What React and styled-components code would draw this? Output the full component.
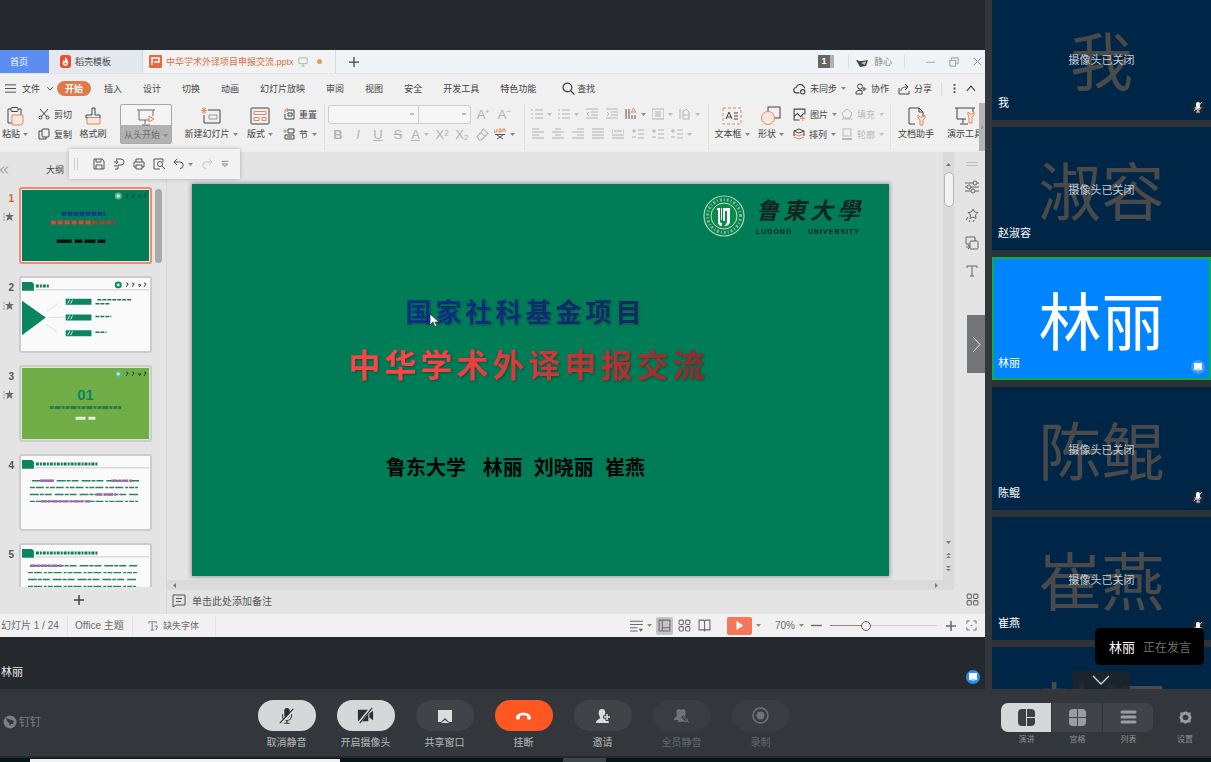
import { useState } from "react";
import styled, { createGlobalStyle, css } from "styled-components";

const GlobalStyle = createGlobalStyle`
  *, *::before, *::after {
    box-sizing: border-box;
  }
  body {
    margin: 0;
    background: #33363b;
    font-family: "Liberation Sans", "Noto Sans CJK SC", sans-serif;
    font-size: 9px;
    color: #444;
  }
  button {
    margin: 0;
    padding: 0;
    border: none;
    background: none;
    color: inherit;
    font: inherit;
    cursor: pointer;
  }
  svg {
    display: block;
    flex: none;
  }
`;

/* ---------- page ---------- */

const Page = styled.div`
  display: flex;
  flex-direction: column;
  min-height: 100vh;
`;
const Meeting = styled.div`
  display: flex;
  gap: 7px;
  background: #33363b;
`;
const Stage = styled.main`
  flex: 1;
  min-width: 0;
  display: flex;
  flex-direction: column;
  padding-top: 50px;
  background: #25282d;
`;
const StageFooter = styled.div`
  display: flex;
  flex: 1;
  justify-content: space-between;
  align-items: flex-end;
  padding: 0 5px 5px 1px;
  min-height: 48px;
`;
const Speaker = styled.span`
  padding-bottom: 4px;
  font-size: 11px;
  line-height: 16px;
  color: #e8e8e8;
`;

/* ---------- presentation window ---------- */

const Office = styled.section`
  position: relative;
  overflow: hidden;
  background: #f0f0f0;
`;
const TitleBar = styled.div`
  display: flex;
  align-items: center;
  height: 24px;
  background: #eff3f5;
  border-bottom: 1px solid #dfe5e8;
`;
const DocTab = styled.button`
  display: flex;
  align-items: center;
  gap: 4px;
  align-self: stretch;
  width: ${(props) => props.$w}px;
  padding-left: ${(props) => props.$pad}px;
  white-space: nowrap;
  ${(props) =>
    props.$kind === "home" &&
    css`
      background: #5c8df0;
      color: #fff;
    `}
  ${(props) =>
    props.$kind === "plain" &&
    css`
      background: #e4e9f0;
    `}
  ${(props) =>
    props.$kind === "open" &&
    css`
      background: #f1f2f2;
      border-left: 1px solid #d0dbe0;
      border-right: 1px solid #d0dbe0;
      color: #d9703f;
    `}
`;
const Dot = styled.i`
  width: 5px;
  height: 5px;
  margin-left: 5px;
  border-radius: 50%;
  background: #e0a04c;
`;
const WindowTools = styled.div`
  display: flex;
  align-items: center;
  gap: 14px;
  margin-left: auto;
  padding-right: 3px;
  color: #8a8a8a;
`;
const CountBadge = styled.span`
  width: 16px;
  height: 13px;
  border-right: 4px solid #b0b0b0;
  background: #666;
  color: #fff;
  font-weight: bold;
  line-height: 13px;
  text-align: center;
`;
const Account = styled.span`
  display: flex;
  align-items: center;
  gap: 5px;
  margin-right: 7px;
  padding: 0 12px 0 7px;
  border-left: 1px solid #dcdfe0;
  border-right: 1px solid #dcdfe0;
`;

const MenuBar = styled.nav`
  display: flex;
  align-items: center;
  height: 29px;
  padding: 0 8px 0 5px;
  white-space: nowrap;
`;
const MenuList = styled.div`
  display: flex;
  align-items: center;
  gap: 21px;
  padding-left: 13px;
`;
const FileMenu = styled.button`
  display: flex;
  align-items: center;
  gap: 6px;
`;
const StartPill = styled.button`
  width: 34px;
  height: 15px;
  margin-left: 3px;
  border-radius: 8px;
  background: #e07a4b;
  color: #fff;
  font-weight: bold;
`;
const Search = styled.button`
  display: flex;
  align-items: center;
  gap: 2px;
  margin-left: 5px;
`;
const MenuRight = styled.div`
  display: flex;
  align-items: center;
  gap: 9px;
  margin-left: auto;
`;
const MenuDivider = styled.i`
  width: 1px;
  height: 14px;
  margin-right: 2px;
  background: #dedede;
`;
const IconText = styled.button`
  display: flex;
  align-items: center;
  gap: 4px;
  white-space: nowrap;
  color: ${(props) => (props.$dim ? "#b8b8b8" : "inherit")};
`;

const Ribbon = styled.div`
  display: flex;
  height: 49px;
  padding-top: 1px;
  border-bottom: 1px solid #ebebeb;
  > * {
    flex: none;
  }
`;
const BigButton = styled.button`
  display: flex;
  flex-direction: column;
  align-items: center;
  width: ${(props) => props.$w}px;
  height: 40px;
  margin-left: ${(props) => props.$ml || 0}px;
  line-height: 13px;
  white-space: nowrap;
  ${(props) =>
    props.$active &&
    css`
      border: 1px solid #a8a8a8;
      border-radius: 2px;
      background: linear-gradient(#f4f4f4 20px, #b2b2b2 20px);
      color: #6c6c6c;
    `}
`;
const BigIcon = styled.span`
  display: grid;
  place-items: center;
  height: 24px;
`;
const Label = styled.span`
  display: inline-flex;
  align-items: center;
  gap: 3px;
`;
const Stack = styled.div`
  display: flex;
  flex-direction: column;
  align-items: flex-start;
  width: ${(props) => props.$w}px;
  padding-left: ${(props) => props.$pad || 8}px;
  > button {
    height: 20px;
  }
`;
const Separator = styled.i`
  width: 8px;
  height: 46px;
  background: linear-gradient(#e2e2e2, #e2e2e2) center / 1px 100% no-repeat;
`;
const ToolGroup = styled.div`
  width: ${(props) => props.$w}px;
`;
const ToolRow = styled.div`
  display: flex;
  align-items: center;
  height: 20px;
`;
const Tool = styled.button`
  display: flex;
  align-items: center;
  justify-content: center;
  gap: 4px;
  width: ${(props) => props.$w || 20}px;
  height: 18px;
  font-size: 13px;
  font-weight: ${(props) => (props.$bold ? "bold" : "normal")};
  font-style: ${(props) => (props.$italic ? "italic" : "normal")};
  text-decoration: ${(props) => props.$line || "none"};
  color: #b2b2b2;
`;
const FontSelect = styled.select`
  appearance: none;
  width: ${(props) => props.$w}px;
  height: 19px;
  padding: 0 4px;
  border: 1px solid #cdcdcd;
  border-radius: ${(props) => (props.$end ? "0 3px 3px 0" : "3px 0 0 3px")};
  border-left-width: ${(props) => (props.$end ? 0 : 1)}px;
  background: linear-gradient(#bbb, #bbb) right 4px center / 4px 2px no-repeat
    #f6f6f6;
`;
const RibbonMore = styled.button`
  position: absolute;
  top: 53px;
  right: 0;
  width: 6px;
  height: 48px;
  background: #b5b5b8;
  color: #777;
`;

const Workspace = styled.div`
  position: relative;
  display: flex;
  background: #e4e4e4;
`;
const QuickBar = styled.div`
  position: absolute;
  z-index: 2;
  top: -3px;
  left: 69px;
  display: flex;
  align-items: center;
  gap: 8px;
  height: 30px;
  padding: 0 11px 0 5px;
  background: #f2f2f2;
  box-shadow: 0 0 4px #aaa;
  color: #555;
`;
const Grip = styled.i`
  width: 4px;
  height: 12px;
  margin-right: 7px;
  border: solid #ccc;
  border-width: 0 1px;
`;
const Outline = styled.aside`
  display: flex;
  flex-direction: column;
  width: 167px;
  border-right: 1px solid #d8d8d8;
`;
const OutlineHead = styled.div`
  display: flex;
  align-items: center;
  gap: 37px;
  height: 35px;
`;
const ThumbArea = styled.div`
  display: flex;
  height: 400px;
  overflow: hidden;
`;
const ThumbList = styled.ol`
  display: flex;
  flex-direction: column;
  gap: 12px;
  width: 152px;
  margin: 0;
  padding: 0;
  list-style: none;
`;
const ThumbItem = styled.li`
  display: flex;
`;
const ThumbMeta = styled.div`
  display: flex;
  flex-direction: column;
  align-items: flex-end;
  gap: 7px;
  width: 19px;
  padding: 5px 5px 0 0;
  font-size: 10px;
  line-height: 13px;
  font-weight: bold;
  color: ${(props) => (props.$current ? "#c9642f" : "#555")};
`;
const ThumbFrame = styled.button`
  flex: 1;
  height: 77px;
  padding: 1px;
  border: 2px solid ${(props) => (props.$current ? "#f08a70" : "#cccccc")};
  border-radius: 3px;
  background: ${(props) => props.$edge};
`;
const Thumb = styled.div`
  width: 7px;
  height: ${(props) => props.$h}px;
  margin: 2px 0 0 3px;
  border-radius: 4px;
  background: #a9a9a9;
`;
const AddSlide = styled.button`
  display: grid;
  place-items: center;
  height: 26px;
  padding-right: 8px;
`;

const Editor = styled.div`
  flex: 1;
  min-width: 0;
`;
const CanvasRow = styled.div`
  display: flex;
`;
const Canvas = styled.div`
  flex: 1;
  min-width: 0;
  padding: 32px 54px 4px 25px;
`;
const Slide = styled.article`
  position: relative;
  display: flex;
  flex-direction: column;
  align-items: center;
  aspect-ratio: 16 / 9;
  padding-top: 11px;
  background: #007c57;
  box-shadow: 0 0 4px 1px #9a9a9a;
  white-space: nowrap;
`;
const Crest = styled.div`
  display: flex;
  align-items: center;
  align-self: flex-end;
  gap: 11px;
  margin-right: 29px;
`;
const School = styled.div`
  width: 104px;
  color: #10271f;
`;
const SchoolName = styled.div`
  display: flex;
  justify-content: space-between;
  font-size: 23px;
  line-height: 32px;
  font-weight: bold;
  font-style: italic;
`;
const SchoolLatin = styled.div`
  display: flex;
  justify-content: space-between;
  font-size: 7px;
  line-height: 10px;
  font-weight: bold;
  letter-spacing: 1px;
`;
const Topic = styled.h2`
  margin: 57px 30px 0 0;
  background: linear-gradient(90deg, #0a2d8c, #14295e);
  background-clip: text;
  color: transparent;
  font-size: 26px;
  line-height: 38px;
  letter-spacing: 4px;
  filter: drop-shadow(1px 1px 1px rgba(0, 30, 40, 0.35));
`;
const Headline = styled.h1`
  margin: 11px 24px 0 0;
  background: linear-gradient(90deg, #ff4444 20%, #8c2a2c);
  background-clip: text;
  color: transparent;
  font-size: 32px;
  line-height: 46px;
  letter-spacing: 4px;
  filter: drop-shadow(1px 1px 1px rgba(0, 30, 20, 0.45));
`;
const Authors = styled.p`
  margin: 65px 50px 0 0;
  font-size: 20px;
  line-height: 28px;
  font-weight: bold;
  color: #050505;
  white-space: pre;
`;
const Pointer = styled.svg`
  position: absolute;
  top: 33%;
  left: 34%;
`;
const VScroll = styled.div`
  display: flex;
  flex-direction: column;
  align-items: center;
  gap: 5px;
  width: 11px;
  padding: 10px 0 9px;
  background: #dadada;
  color: #777;
`;
const VThumb = styled.div`
  width: 10px;
  height: 35px;
  margin-bottom: auto;
  border: 1px solid #b5b5b5;
  border-radius: 5px;
  background: #f3f3f3;
`;
const ScrollMarks = styled.div`
  display: flex;
  flex-direction: column;
  gap: 8px;
`;
const HScroll = styled.div`
  display: flex;
  justify-content: space-between;
  align-items: center;
  height: 10px;
  padding: 0 15px 0 5px;
  background: #dadada;
  color: #777;
`;
const Notes = styled.div`
  display: flex;
  align-items: center;
  gap: 6px;
  height: 24px;
  padding: 0 0 3px 5px;
  font-size: 10px;
  color: #555;
`;
const Rail = styled.div`
  display: flex;
  flex-direction: column;
  align-items: center;
  gap: 14px;
  width: 31px;
  padding: 10px 0 8px 5px;
  color: #666;
`;
const RailFoot = styled.button`
  margin-top: auto;
`;
const Collapse = styled.button`
  position: absolute;
  top: 163px;
  right: 0;
  display: grid;
  place-items: center;
  width: 18px;
  height: 58px;
  background: #737577;
  color: #e6e6e6;
`;

const StatusBar = styled.div`
  display: flex;
  align-items: center;
  height: 23px;
  padding-right: 8px;
  background: #f1f1f1;
  color: #6a6a6a;
  white-space: nowrap;
`;
const StatusCell = styled.span`
  display: flex;
  align-items: center;
  gap: 5px;
  width: ${(props) => props.$w}px;
  padding-left: ${(props) => props.$pad}px;
  border-right: 1px solid #e4e4e4;
  line-height: 20px;
  font-size: ${(props) => props.$size || 9}px;
`;
const ViewTools = styled.div`
  display: flex;
  align-items: center;
  gap: 4px;
  margin-left: auto;
`;
const ViewButton = styled.button`
  display: grid;
  place-items: center;
  width: 17px;
  height: 18px;
  margin-right: -1px;
  border-radius: 2px;
  background: ${(props) => (props.$on ? "#c4c4c4" : "none")};
`;
const PlayButton = styled.button`
  display: grid;
  place-items: center;
  width: 25px;
  height: 18px;
  margin-left: 11px;
  border-radius: 2px;
  background: #f5775a;
  color: #fff;
`;
const Percent = styled.span`
  margin-left: 10px;
  font-size: 10px;
`;
const ZoomControl = styled.div`
  display: flex;
  align-items: center;
  gap: 8px;
  margin: 0 5px 0 3px;
`;
const ZoomRange = styled.input`
  appearance: none;
  width: 107px;
  height: 12px;
  margin: 0;
  background: linear-gradient(90deg, #8a8a8a 32%, #cfcfcf 32%) center / 100% 1px
    no-repeat;
  &::-webkit-slider-thumb {
    appearance: none;
    width: 10px;
    height: 10px;
    border: 1px solid #666;
    border-radius: 50%;
    background: #f1f1f1;
  }
`;

/* ---------- participants ---------- */

const Sidebar = styled.aside`
  position: relative;
  width: 219px;
  height: 689px;
  overflow: hidden;
  background: #2e3136;
`;
const TileList = styled.ul`
  display: flex;
  flex-direction: column;
  gap: 7px;
  margin: -3px 0 0;
  padding: 0;
  list-style: none;
`;
const Tile = styled.li`
  position: relative;
  display: grid;
  place-items: center;
  height: 123px;
  border: 2px solid ${(props) => (props.$active ? "#0bb04c" : "#002647")};
  background: ${(props) => (props.$active ? "#0084ff" : "#002647")};
`;
const Initials = styled.span`
  font-size: 63px;
  line-height: 80px;
  padding-top: 9px;
  color: ${(props) => (props.$active ? "#fff" : "#4a4a4a")};
`;
const CameraOff = styled.span`
  position: absolute;
  inset: 0;
  display: grid;
  place-items: center;
  font-size: 11px;
  color: #c9cdd1;
`;
const TileName = styled.span`
  position: absolute;
  left: 4px;
  bottom: 7px;
  font-size: 11px;
  line-height: 16px;
  color: #fff;
`;
const TileBadge = styled.span`
  position: absolute;
  right: 4px;
  bottom: 4px;
`;
const Speaking = styled.div`
  position: absolute;
  right: 7px;
  bottom: 24px;
  display: flex;
  align-items: center;
  gap: 8px;
  height: 37px;
  padding: 0 13px 0 14px;
  border-radius: 5px;
  background: #000;
  font-size: 12px;
  color: #6e6e6e;
  b {
    font-size: 13px;
    font-weight: normal;
    color: #fff;
  }
`;
const ScrollDown = styled.button`
  position: absolute;
  left: 80px;
  bottom: 0;
  display: grid;
  place-items: center;
  width: 58px;
  height: 18px;
  background: rgba(30, 36, 44, 0.85);
  color: #d5d5d5;
`;

/* ---------- meeting controls ---------- */

const Controls = styled.footer`
  display: flex;
  justify-content: space-between;
  align-items: flex-start;
  height: 67px;
  padding: 11px 17px 0 3px;
  background: #33363b;
`;
const Brand = styled.div`
  display: flex;
  align-items: center;
  gap: 2px;
  width: 43px;
  padding-top: 14px;
  font-size: 11px;
  line-height: 16px;
  color: #7c7e82;
`;
const Actions = styled.div`
  display: flex;
  gap: 21px;
`;
const Action = styled.button`
  display: flex;
  flex-direction: column;
  align-items: center;
  gap: 4px;
  width: 58px;
  font-size: 10px;
  line-height: 15px;
  white-space: nowrap;
  color: ${(props) => (props.disabled ? "#66696d" : "#b9babc")};
`;
const pillTones = {
  light: "background: #d6d7d9; color: #2b2e33;",
  dark: "background: #404347; color: #dcdcdc;",
  end: "background: #ff5722; color: #fff;",
  off: "background: #393c40; color: #717377;",
};
const Pill = styled.span`
  display: grid;
  place-items: center;
  width: 58px;
  height: 31px;
  border-radius: 16px;
  ${(props) => pillTones[props.$tone]}
`;
const Layouts = styled.div`
  display: flex;
  padding-top: 3px;
`;
const LayoutButton = styled.button`
  display: flex;
  flex-direction: column;
  align-items: center;
  gap: 2px;
  width: 51px;
  font-size: 8px;
  line-height: 12px;
  color: #8f9194;
  &:first-child > span {
    border-radius: 7px 0 0 7px;
  }
  &:nth-child(3) > span {
    border-radius: 0 7px 7px 0;
  }
`;
const Segment = styled.span`
  display: grid;
  place-items: center;
  width: 100%;
  height: 29px;
  border-right: 1px solid #33363b;
  background: ${(props) => (props.$on ? "#d6d7d9" : "#404347")};
  color: ${(props) => (props.$on ? "#3c3f44" : "#9b9da0")};
`;
const Settings = styled.button`
  display: flex;
  flex-direction: column;
  align-items: center;
  gap: 2px;
  width: 18px;
  margin-left: 22px;
  font-size: 8px;
  line-height: 12px;
  white-space: nowrap;
  color: #8f9194;
`;
const Bare = styled.span`
  display: grid;
  place-items: center;
  height: 29px;
  color: #9b9da0;
`;
const Desktop = styled.div`
  display: flex;
  align-items: flex-end;
  gap: 223px;
  flex: 1;
  min-height: 6px;
  padding-left: 30px;
  border-top: 2px solid #25282c;
  background: #05171b;
`;
const DesktopItem = styled.i`
  width: ${(props) => props.$w}px;
  height: ${(props) => props.$h}px;
  background: ${(props) => props.$color};
`;

/* ---------- icons ---------- */

const Svg = ({ w = 12, h = w, box = "0 0 12 12", sw = 1, children }) => (
  <svg
    width={w}
    height={h}
    viewBox={box}
    fill="none"
    stroke="currentColor"
    strokeWidth={sw}
    aria-hidden="true"
  >
    {children}
  </svg>
);
const ORANGE = "#e08a5c";

const Caret = ({ color = "#888" }) => (
  <svg width="5" height="3" viewBox="0 0 5 3" aria-hidden="true">
    <path d="M0 0h5L2.500 3z" fill={color} />
  </svg>
);
const Chevron = ({ w = 9, h = 6, d = "M1 1l3.500 4L8 1", box = "0 0 9 6" }) => (
  <Svg w={w} h={h} box={box}>
    <path d={d} />
  </Svg>
);

const icons = {
  paste: (
    <Svg w={20} box="0 0 20 20">
      <path d="M6 3H3v14h5M13 3h3v6" />
      <rect x="6" y="1.500" width="7" height="4" rx="1" />
      <path d="M7 9h11v8l-2 2H7z" stroke={ORANGE} fill="#fbe6da" />
    </Svg>
  ),
  cut: (
    <Svg w={12}>
      <path d="M2 1l7 8M10 1L3 9" />
      <circle cx="2.500" cy="9.500" r="1.500" />
      <circle cx="9.500" cy="9.500" r="1.500" />
    </Svg>
  ),
  copy: (
    <Svg w={12}>
      <rect x="4" y="1" width="7" height="8" rx="1" />
      <path d="M4 3H1v8h7V9" />
    </Svg>
  ),
  brush: (
    <Svg w={18} box="0 0 18 18">
      <path d="M8 1h3v7h5v3H2V8h6z" />
      <path d="M3 11v6h13v-6" stroke={ORANGE} fill="#fbe6da" />
    </Svg>
  ),
  screen: (
    <Svg w={20} box="0 0 20 20">
      <path d="M1 3h18M3 3v10h11M17 3v6M9 13v4M6 18h8" />
      <path d="M13 9l5 3-5 3z" stroke={ORANGE} fill="#fbe6da" />
    </Svg>
  ),
  newSlide: (
    <Svg w={20} box="0 0 20 20">
      <path d="M7 4h12v13H3V9" />
      <path d="M8 9h8v4H8z" stroke="#999" />
      <path d="M3 1v7M0 4.500h6M1 2l4 5M5 2L1 7" stroke={ORANGE} />
    </Svg>
  ),
  layout: (
    <Svg w={20} box="0 0 20 20">
      <rect x="1" y="2" width="18" height="16" rx="1" />
      <path d="M4 5.500h12v3H4zM4 11.500h5v3H4zM12 11.500h4v3h-4z" stroke={ORANGE} />
    </Svg>
  ),
  reset: (
    <Svg w={12}>
      <path d="M4 2h7v9H2V6M5 5h4v3H5z" />
      <path d="M5 0L2 2l3 2M2 2v3" stroke={ORANGE} />
    </Svg>
  ),
  section: (
    <Svg w={12}>
      <path d="M5 1h6v4H5zM2 7h9v4H2zM4 9h5" />
      <path d="M0 3h4M2 1v4" stroke={ORANGE} />
    </Svg>
  ),
  textBox: (
    <Svg w={20} box="0 0 20 20">
      <rect x="1" y="2" width="18" height="16" stroke={ORANGE} strokeDasharray="3 2" />
      <path d="M4 13l3-7 3 7M5 11h4M12 7h4M12 10h4M12 13h4" />
    </Svg>
  ),
  shapes: (
    <Svg w={20} box="0 0 20 20">
      <rect x="7" y="1" width="12" height="11" />
      <circle cx="7" cy="12" r="6.500" stroke={ORANGE} fill="#fbe6da" />
    </Svg>
  ),
  picture: (
    <Svg w={13}>
      <path d="M11 6V1H1v10h5M1 8l3-3 3 3 3-3" />
      <path d="M9 7v5M6.500 9.500h5" stroke={ORANGE} />
    </Svg>
  ),
  layers: (
    <Svg w={12}>
      <path d="M1 6l5 2 5-2M1 9l5 2 5-2" stroke={ORANGE} />
      <path d="M6 1l5 2-5 2-5-2zM1 3v5M11 3v5" />
    </Svg>
  ),
  fill: (
    <Svg w={12}>
      <path d="M6 1l5 4-2 5H3L1 5zM1 11h10" />
    </Svg>
  ),
  outline: (
    <Svg w={12}>
      <rect x="2" y="1" width="8" height="7" />
      <path d="M1 11h10" strokeWidth="2" />
    </Svg>
  ),
  helper: (
    <Svg w={20} box="0 0 20 20">
      <path d="M9 18H3V2h10l4 4v4" />
      <path d="M13 2v4h4" />
      <path d="M12 9v3l2 2v5h3v-5l2-2V9l-2 2h-3z" stroke={ORANGE} fill="#fbe6da" />
    </Svg>
  ),
  tools: (
    <Svg w={20} box="0 0 20 20">
      <path d="M0 2h20M2 2v11h9M18 2v4M8 13v4M5 18h8" />
      <path d="M13 6v3l1 2v6h3v-6l2-2V6l-2 2h-2z" stroke={ORANGE} fill="#fbe6da" />
    </Svg>
  ),
  search: (
    <Svg w={13} sw={1.2}>
      <circle cx="5" cy="5" r="4" />
      <path d="M8 8l3.500 3.500" />
    </Svg>
  ),
  cloud: (
    <Svg w={13}>
      <path d="M6 10H3.500a2.500 2.500 0 01-.5-5 3.500 3.500 0 016.500-1A3 3 0 0111 6" />
      <circle cx="9" cy="9" r="2" />
    </Svg>
  ),
  user: (
    <Svg w={12}>
      <circle cx="5" cy="3.500" r="2.500" />
      <path d="M1 11V9l2-1.500h4V11zM9 4v4M7.500 6h4" />
    </Svg>
  ),
  share: (
    <Svg w={12}>
      <path d="M1 5v6h10V8M3 8c0-3 2-4 6-4M7 1l3 3-3 3" />
    </Svg>
  ),
  save: (
    <Svg w={12}>
      <path d="M1 1h8l2 2v8H1zM3 1v3h5V1M3 11V7h6v4" />
    </Svg>
  ),
  exportFile: (
    <Svg w={12}>
      <path d="M3 1h5a3 3 0 010 6H5v4M1 8h3M1 4h4M3 2l2 2-2 2M2 11h3" />
    </Svg>
  ),
  print: (
    <Svg w={12}>
      <path d="M3 4V1h6v3M3 9H1V4h10v5H9M3 7h6v4H3z" />
    </Svg>
  ),
  preview: (
    <Svg w={12}>
      <path d="M10 4V1H1v10h6" />
      <circle cx="7" cy="6" r="2.500" />
      <path d="M9 8l3 3" />
    </Svg>
  ),
  undo: (
    <Svg w={12}>
      <path d="M4 1L1 4l3 3M1 4h6a3 3 0 010 6.500" />
    </Svg>
  ),
  redo: (
    <Svg w={12}>
      <path d="M8 1l3 3-3 3M11 4H5a3 3 0 000 6.500" stroke="#c4c4c4" />
    </Svg>
  ),
  more: (
    <Svg w={8}>
      <path d="M1 2h10M2 6h8l-4 4z" />
    </Svg>
  ),
  sliders: (
    <Svg w={14} box="0 0 14 14">
      <path d="M0 3h8M12 3h2M0 7h2M6 7h8M0 11h6M10 11h4" />
      <circle cx="10" cy="3" r="2" />
      <circle cx="4" cy="7" r="2" />
      <circle cx="8" cy="11" r="2" />
    </Svg>
  ),
  effects: (
    <Svg w={14} box="0 0 14 14">
      <path d="M8 1l1.500 3 3.500.500-2.500 2.500.500 3.500-3-1.500-3 1.500.500-3.500L3 4.500 6.500 4zM3 9l-2 3M5 12l-1 2M9 12l-1 2" />
    </Svg>
  ),
  swap: (
    <Svg w={14} box="0 0 14 14">
      <rect x="5" y="5" width="8" height="8" rx="1" />
      <path d="M10 5V1H1v7h4M1 11h4M3 9l2 2-2 2" />
    </Svg>
  ),
  type: (
    <Svg w={14} box="0 0 14 14">
      <path d="M2 4V2h10v2M7 2v10M5 12h4" />
    </Svg>
  ),
  grid: (
    <Svg w={13}>
      <rect x="1" y="1" width="4" height="4" rx="1" />
      <rect x="7" y="1" width="4" height="4" rx="1" />
      <rect x="1" y="7" width="4" height="4" rx="1" />
      <rect x="7" y="7" width="4" height="4" rx="1" />
    </Svg>
  ),
  note: (
    <Svg w={14} box="0 0 14 14">
      <path d="M1 1h12v10H4l-3 2zM4 4.500h6M4 7.500h5" />
    </Svg>
  ),
  fontMissing: (
    <Svg w={10}>
      <path d="M1 3V1h9v2M5 1v10M3 11h4M8 6h3v2l-2 3" />
    </Svg>
  ),
  noteList: (
    <Svg w={13}>
      <path d="M0 2h12M0 5h12M0 8h7M0 11h7" />
      <path d="M8 9h4l-2 3z" fill="currentColor" stroke="none" />
    </Svg>
  ),
  normalView: (
    <Svg w={13}>
      <path d="M1 1h10v10H1zM4 1v10M4 8h7" />
    </Svg>
  ),
  book: (
    <Svg w={13}>
      <path d="M1 1h4l1 1 1-1h4v9H7l-1 1-1-1H1zM6 2v9" />
    </Svg>
  ),
  fit: (
    <Svg w={11}>
      <path d="M1 4V1h3M8 1h3v3M11 8v3H8M4 11H1V8M5 6h2" />
    </Svg>
  ),
  plus: (
    <Svg w={12} sw={1.5}>
      <path d="M6 1v10M1 6h10" />
    </Svg>
  ),
  minus: (
    <Svg w={11} sw={1.5}>
      <path d="M0 6h12" />
    </Svg>
  ),
  play: (
    <Svg w={9}>
      <path d="M2 0l9 6-9 6z" fill="currentColor" stroke="none" />
    </Svg>
  ),
};

const lineIcon = (d) => (
  <Svg w={12}>
    <path d={d} />
  </Svg>
);
const bullets = lineIcon("M0 2h2M4 2h8M0 6h2M4 6h8M0 10h2M4 10h8");
const outdent = lineIcon("M0 1h12M5 4h7M5 7h7M0 10h12M3 4L1 6l2 2");
const indent = lineIcon("M0 1h12M5 4h7M5 7h7M0 10h12M1 4l2 2-2 2");
const alignLeft = lineIcon("M0 1h7M0 4h12M0 7h7M0 10h12");
const alignCenter = lineIcon("M3 1h6M0 4h12M3 7h6M0 10h12");
const alignRight = lineIcon("M5 1h7M0 4h12M5 7h7M0 10h12");
const justify = lineIcon("M0 1h12M0 4h12M0 7h12M0 10h12");
const spread = lineIcon("M0 1v4M12 1v4M2 3h8M0 7h12M0 10h12");
const lineGap = lineIcon("M6 2h6M6 6h6M6 10h6M2 1v4M0 3h4M0 9h4");
const framed = lineIcon("M0 1h12v10H0zM3 4h6M3 6h6M3 8h6");
const columns = lineIcon("M1 1v10M4 3v8h6V4L7 1 4 4M4 7h6");

const MicOff = () => (
  <Svg w={18} box="0 0 20 20" sw={1.2}>
    <rect x="7" y="1" width="6" height="11" rx="3" fill="currentColor" stroke="none" />
    <path d="M5 8v2a5 5 0 0010 0V8M10 15v3M7 18h6" />
    <path d="M18 3L3 19" stroke="#d6d7d9" strokeWidth="2" />
    <path d="M17 2L2 18" strokeWidth="1.300" />
  </Svg>
);
const MutedBadge = () => (
  <svg width="14" height="14" viewBox="0 0 14 14" aria-hidden="true">
    <circle cx="7" cy="7" r="7" fill="#1b2633" />
    <rect x="5" y="2" width="4" height="7" rx="2" fill="#fff" />
    <path d="M4 7c0 4 6 4 6 0M7 10v2M5 12h4M11 2L3 11" fill="none" stroke="#ddd" />
  </svg>
);
const ShareBadge = ({ fill }) => (
  <svg width="14" height="14" viewBox="0 0 14 14" aria-hidden="true">
    <circle cx="7" cy="7" r="7" fill={fill} />
    <path d="M3 3h8v7H9.500L7 8.500 4.500 10H3zM5 10.500L7 9l2 1.500z" fill="#fff" />
  </svg>
);

const CameraOffIcon = () => (
  <Svg w={19} box="0 0 20 20">
    <path
      d="M2 4h11v12H2zM14 8l4-3v10l-4-3z"
      fill="currentColor"
      stroke="none"
    />
    <path d="M16 2L3 18" stroke="#d6d7d9" strokeWidth="3" />
    <path d="M17 2L4 18" strokeWidth="1.200" />
  </Svg>
);
const ShareIcon = () => (
  <Svg w={16} box="0 0 16 16">
    <path d="M1 2h14v12h-3L8 10l-4 4H1z" fill="currentColor" stroke="none" />
    <path d="M4 15l4-3 4 3z" fill="currentColor" stroke="none" />
  </Svg>
);
const HangUpIcon = () => (
  <Svg w={17} h={8} box="0 0 17 8">
    <path
      d="M1 6c0-7 15-7 15 0 0 2-4 2-4 0V4C10 3 7 3 5 4v2c0 2-4 2-4 0z"
      fill="currentColor"
      stroke="none"
    />
  </Svg>
);
const InviteIcon = () => (
  <Svg w={16} box="0 0 16 16">
    <path
      d="M1 15c0-4 4-3 4-6C3 6 3 1 7 1s4 5 2 8c0 3 5 2 5 6z"
      fill="currentColor"
      stroke="none"
    />
    <path d="M12 5v8M8 9h8" stroke="#404347" strokeWidth="3" />
    <path d="M12 6v6M9 9h6" strokeWidth="1.500" />
  </Svg>
);
const MuteAllIcon = () => (
  <Svg w={17} box="0 0 17 17">
    <path
      d="M1 13c0-3 3-3 3-5-1-2-1-6 2-6s3 4 2 6l1 5zM5 15c0-3 3-3 3-6-1-3-1-7 2-7s3 4 2 7l3 5z"
      fill="currentColor"
      stroke="none"
    />
    <path d="M9 9l6 6" stroke="#393c40" strokeWidth="3" />
    <path d="M9 8l7 8M10 13l3 2 2-3" />
  </Svg>
);
const RecordIcon = () => (
  <Svg w={17} box="0 0 17 17" sw={1.5}>
    <circle cx="8.500" cy="8.500" r="7.500" />
    <circle cx="8.500" cy="8.500" r="4" fill="currentColor" stroke="none" />
  </Svg>
);
const SpeakerLayout = () => (
  <Svg w={17} box="0 0 17 17">
    <path
      d="M4 0h4v17H4a4 4 0 01-4-4V4a4 4 0 014-4zM9 0h4a4 4 0 014 4v4H9zM9 9h8v4a4 4 0 01-4 4H9z"
      fill="currentColor"
      stroke="none"
    />
  </Svg>
);
const GridLayout = () => (
  <Svg w={17} box="0 0 17 17">
    <path
      d="M4 0h4v8H0V4a4 4 0 014-4zM9 0h4a4 4 0 014 4v4H9zM0 9h8v8H4a4 4 0 01-4-4zM9 9h8v4a4 4 0 01-4 4H9z"
      fill="currentColor"
      stroke="none"
    />
  </Svg>
);
const ListLayout = () => (
  <Svg w={17} box="0 0 17 17" sw={3}>
    <path d="M2 3h13M2 8h13M2 13h13" strokeLinecap="round" />
  </Svg>
);
const Gear = () => (
  <Svg w={13} box="0 0 14 14" sw={3}>
    <path d="M7 2l2 1h2v2l1 2-1 2v2H9l-2 1-2-1H3V9L2 7l1-2V3h2z" />
  </Svg>
);
const DingTalk = () => (
  <svg width="14" height="14" viewBox="0 0 14 14" aria-hidden="true">
    <circle cx="7" cy="7" r="6.500" fill="#7c7e82" />
    <path d="M3 3l8 3-1 3H8l-1 2-1-3-2-2z" fill="#33363b" />
  </svg>
);

const Seal = () => (
  <svg width="42" height="42" viewBox="0 0 42 42" aria-hidden="true">
    <circle cx="21" cy="21" r="20" fill="#0a8150" stroke="#a9dcbf" strokeWidth="1.200" />
    <circle cx="21" cy="21" r="16.500" fill="none" stroke="#bfe6cf" strokeWidth="3" strokeDasharray="1 2 2 2" opacity="0.600" />
    <circle cx="21" cy="21" r="13" fill="#0b8a48" stroke="#bfe6cf" />
    <path
      d="M14 13h3v13c0 2 1 2 2 2v3c-3 0-4-2-4-4V15h-1zM20 13h7v13c0 3-2 5-6 5 2-1 3-3 3-5V16h-2v10h-2zM18 13h1v12h-1z"
      fill="#fff"
    />
  </svg>
);

/* ---------- slide thumbnails ---------- */

const MiniLogo = ({ dark }) => (
  <g>
    <circle cx="97" cy="6" r="3.500" fill={dark ? "#5db68a" : "#0c8a5c"} />
    <circle cx="97" cy="6" r="1.500" fill="#cfe" />
    <path
      d="M105 4l2 1-2 3M111 4l2 1-2 3M117 6h3l-2 2M123 4l2 1-2 3"
      stroke="#24382f"
      fill="none"
    />
  </g>
);
const MiniLines = ({ rows, mark }) =>
  rows.map(([y, x, w], i) => (
    <g key={y}>
      <path
        d={`M${x} ${y}h${w}`}
        stroke="#26835f"
        strokeWidth="1.500"
        strokeDasharray={i % 2 ? "5 1 8 2 3 1" : "9 1 4 1 7 3"}
      />
      {mark[i] && (
        <path
          d={`M${mark[i][0]} ${y}h${mark[i][1]}`}
          stroke="#9a68b0"
          strokeWidth="2.500"
          strokeDasharray="6 1 3 1"
        />
      )}
    </g>
  ));
const MiniHead = ({ w }) => (
  <g>
    <path d="M0 3h10l2 2v7H0z" fill="#0b8560" />
    <path d={`M14 7h${w}`} stroke="#137a56" strokeWidth="3" strokeDasharray="3 1 2 1" />
    <path d="M13 11h115" stroke="#ccc" strokeWidth="1" />
  </g>
);
const MiniSlide = ({ bg, children }) => (
  <svg width="100%" height="100%" viewBox="0 0 128 72" preserveAspectRatio="none">
    <rect width="128" height="72" fill={bg} />
    {children}
  </svg>
);

const slides = [
  {
    edge: "#e9e9e9",
    star: true,
    art: (
      <MiniSlide bg="#007c57">
        <MiniLogo dark />
        <path d="M40 24h44" stroke="#123c85" strokeWidth="4" strokeDasharray="5 1" />
        <path d="M29 33h43" stroke="#e0443f" strokeWidth="4" strokeDasharray="5 2" />
        <path d="M71 33h24" stroke="#99443c" strokeWidth="4" strokeDasharray="5 2" />
        <path d="M35 52h15M53 52h8M63 52h11M76 52h8" stroke="#04120c" strokeWidth="3.500" />
      </MiniSlide>
    ),
  },
  {
    edge: "#fafafa",
    star: true,
    art: (
      <MiniSlide bg="#fafafa">
        <MiniHead w={14} />
        <MiniLogo />
        <path d="M0 22l24 17L0 57z" fill="#0b8560" />
        <path d="M25 33l11-8M27 39h14M24 46l12 8" stroke="#ddd" />
        <path d="M44 23h26M44 39h26M44 55h26" stroke="#0b8560" strokeWidth="6" />
        <path d="M46 25l2-4M49 25l2-4M46 41l2-4M49 41l2-4M46 57l2-4M49 57l2-4" stroke="#d4ede2" />
        <path d="M76 21h34M74 25h15M74 38h16M74 54h11" stroke="#26705a" strokeWidth="1.500" strokeDasharray="4 1" />
      </MiniSlide>
    ),
  },
  {
    edge: "#dcebcf",
    star: true,
    art: (
      <MiniSlide bg="#70ad47">
        <MiniLogo dark />
        <text x="64" y="32" textAnchor="middle" fontSize="15" fontWeight="bold" fill="#0b8560">
          01
        </text>
        <path d="M28 40h72" stroke="#2a7d4a" strokeWidth="3" strokeDasharray="4 1 6 1 3 1" />
        <path d="M54 51h10M67 51h7" stroke="#e2f0d8" strokeWidth="3" />
      </MiniSlide>
    ),
  },
  {
    edge: "#fafafa",
    art: (
      <MiniSlide bg="#fafafa">
        <MiniHead w={62} />
        <MiniLines
          rows={[
            [24, 10, 108],
            [31, 8, 109],
            [38, 8, 109],
            [45, 8, 109],
          ]}
          mark={[[90, 22], null, [75, 20], [19, 50]]}
        />
        <path d="M18 24h14" stroke="#9a68b0" strokeWidth="2.500" />
      </MiniSlide>
    ),
  },
  {
    edge: "#fafafa",
    art: (
      <MiniSlide bg="#fafafa">
        <MiniHead w={62} />
        <MiniLines
          rows={[
            [20, 8, 108],
            [27, 6, 110],
            [34, 6, 110],
            [41, 6, 109],
            [48, 6, 109],
          ]}
          mark={[[8, 32]]}
        />
      </MiniSlide>
    ),
  },
];

/* ---------- content ---------- */

const menus = [
  "插入",
  "设计",
  "切换",
  "动画",
  "幻灯片放映",
  "审阅",
  "视图",
  "安全",
  "开发工具",
  "特色功能",
];

const people = [
  { name: "我", initials: "我", badge: "muted" },
  { name: "赵淑容", initials: "淑容" },
  { name: "林丽", initials: "林丽", active: true, badge: "share" },
  { name: "陈鲲", initials: "陈鲲", badge: "muted" },
  { name: "崔燕", initials: "崔燕", badge: "muted" },
  { name: "韩河", initials: "韩河" },
];

const actions = [
  { label: "取消静音", tone: "light", icon: <MicOff /> },
  { label: "开启摄像头", tone: "light", icon: <CameraOffIcon /> },
  { label: "共享窗口", tone: "dark", icon: <ShareIcon /> },
  { label: "挂断", tone: "end", icon: <HangUpIcon /> },
  { label: "邀请", tone: "dark", icon: <InviteIcon /> },
  { label: "全员静音", tone: "off", icon: <MuteAllIcon />, disabled: true },
  { label: "录制", tone: "off", icon: <RecordIcon />, disabled: true },
];

const layouts = [
  { label: "演讲", icon: <SpeakerLayout /> },
  { label: "宫格", icon: <GridLayout /> },
  { label: "列表", icon: <ListLayout /> },
];

const Big = ({ icon, label, caret, ...rest }) => (
  <BigButton {...rest}>
    <BigIcon>{icon}</BigIcon>
    <Label>
      {label}
      {caret && <Caret />}
    </Label>
  </BigButton>
);

const Small = ({ icon, label, caret, dim }) => (
  <IconText $dim={dim}>
    {icon}
    {label}
    {caret && <Caret color={dim ? "#c4c4c4" : "#888"} />}
  </IconText>
);

const TitleRow = () => (
  <TitleBar>
    <DocTab $w={49} $pad={10} $kind="home">
      首页
    </DocTab>
    <DocTab $w={93} $pad={11} $kind="plain">
      <svg width="11" height="13" viewBox="0 0 11 13" aria-hidden="true">
        <rect width="11" height="13" rx="3" fill="#ee4d2d" />
        <path d="M5 2c4 3 4 8 1 9-4 0-4-4-2-6l1 2z" fill="#fff" />
        <circle cx="5.500" cy="8.500" r="1" fill="#ee4d2d" />
      </svg>
      稻壳模板
    </DocTab>
    <DocTab $w={194} $pad={6} $kind="open">
      <svg width="13" height="13" viewBox="0 0 13 13" aria-hidden="true">
        <rect width="13" height="13" rx="1" fill="#e8683f" />
        <path d="M3 10V3h7v4H5" fill="none" stroke="#fff" strokeWidth="1.500" />
      </svg>
      中华学术外译项目申报交流.pptx
      <Svg w={10}>
        <path d="M1 1h10v7H1zM4 11h4M6 8v3" stroke="#aaa" />
      </Svg>
      <Dot />
    </DocTab>
    <DocTab $w={36} $pad={13} aria-label="新建标签">
      <Svg w={10} sw={1.5}>
        <path d="M6 0v12M0 6h12" />
      </Svg>
    </DocTab>
    <WindowTools>
      <CountBadge>1</CountBadge>
      <Account>
        <svg width="13" height="13" viewBox="0 0 13 13" aria-hidden="true">
          <path d="M0 5l6 1 6-1-2 6-6 1z" fill="#444" />
          <path d="M5 8l5-2-1 4z" fill="#b8cf8a" />
          <circle cx="4" cy="4" r="2" fill="#fff" />
        </svg>
        静心
      </Account>
      <Svg w={9}>
        <path d="M0 7h12" />
      </Svg>
      <Svg w={10}>
        <path d="M3 3V1h8v7H9M1 4h7v7H1z" />
      </Svg>
      <Svg w={9} sw={1.3}>
        <path d="M1 1l10 10M11 1L1 11" />
      </Svg>
    </WindowTools>
  </TitleBar>
);

const Menus = () => (
  <MenuBar>
    <FileMenu>
      <Svg w={11}>
        <path d="M0 2h12M0 6h12M0 10h12" />
      </Svg>
      文件
      <Chevron w={8} h={5} />
    </FileMenu>
    <StartPill>开始</StartPill>
    <MenuList>
      {menus.map((m) => (
        <button key={m}>{m}</button>
      ))}
      <Search>
        {icons.search}
        查找
      </Search>
    </MenuList>
    <MenuRight>
      <Small icon={icons.cloud} label="未同步" caret />
      <Small icon={icons.user} label="协作" />
      <Small icon={icons.share} label="分享" />
      <MenuDivider />
      <Svg w={3} h={11} box="0 0 3 12">
        <path d="M1.500 1v2M1.500 5v2M1.500 9v2" strokeWidth="2" />
      </Svg>
      <Chevron w={12} h={7} d="M1 5l3.500-4L8 5" />
    </MenuRight>
  </MenuBar>
);

const RibbonRow = () => (
  <Ribbon>
    <Big $w={30} icon={icons.paste} label="粘贴" caret />
    <Stack $w={46}>
      <Small icon={icons.cut} label="剪切" />
      <Small icon={icons.copy} label="复制" />
    </Stack>
    <Big $w={34} icon={icons.brush} label="格式刷" />
    <Big $w={52} $ml={10} $active icon={icons.screen} label="从头开始" caret />
    <Big $w={62} $ml={8} icon={icons.newSlide} label="新建幻灯片" caret />
    <Big $w={36} icon={icons.layout} label="版式" caret />
    <Stack $w={42} $pad={5}>
      <Small icon={icons.reset} label="重置" />
      <Small icon={icons.section} label="节" caret />
    </Stack>
    <Separator />
    <ToolGroup $w={192}>
      <ToolRow>
        <FontSelect $w={91} aria-label="字体" />
        <FontSelect $w={52} $end aria-label="字号" />
        <Tool $w={24}>A⁺</Tool>
        <Tool $w={18}>A⁻</Tool>
      </ToolRow>
      <ToolRow>
        <Tool $bold>B</Tool>
        <Tool $italic>I</Tool>
        <Tool $line="underline">U</Tool>
        <Tool $line="line-through">S</Tool>
        <Tool $w={24} $line="underline">
          A<Caret color="#bbb" />
        </Tool>
        <Tool>X²</Tool>
        <Tool>X₂</Tool>
        <Tool aria-label="清除格式">
          <Svg w={13}>
            <path d="M7 1l4 4-6 6H3L1 8zM4 4l5 4" />
          </Svg>
        </Tool>
        <Tool $w={24} aria-label="拼音指南">
          <Svg w={12}>
            <path d="M0 1v3h3V1M5 1h2v3H5V2M9 4V1h2v3" stroke={ORANGE} />
            <path d="M1 6.500h10M3 7l6 4M9 7l-6 4" stroke="#555" />
          </Svg>
          <Caret />
        </Tool>
      </ToolRow>
    </ToolGroup>
    <Separator />
    <ToolGroup $w={176}>
      <ToolRow>
        <Tool $w={27} aria-label="项目符号">
          {bullets}
          <Caret color="#bbb" />
        </Tool>
        <Tool $w={27} aria-label="编号">
          {bullets}
          <Caret color="#bbb" />
        </Tool>
        <Tool aria-label="减少缩进">{outdent}</Tool>
        <Tool aria-label="增加缩进">{indent}</Tool>
        <Tool $w={27} aria-label="文字方向">
          <Svg w={12}>
            <path d="M1 1v10M4 1v10M7 7v4M10 7v4" stroke="#555" />
            <path d="M6 5l2.500-5L11 5M7 4h3" stroke={ORANGE} />
          </Svg>
          <Caret />
        </Tool>
        <Tool $w={27} aria-label="对齐文本">
          {framed}
          <Caret color="#bbb" />
        </Tool>
        <Tool $w={27} aria-label="分栏">
          {columns}
          <Caret color="#bbb" />
        </Tool>
      </ToolRow>
      <ToolRow>
        <Tool aria-label="左对齐">{alignLeft}</Tool>
        <Tool aria-label="居中">{alignCenter}</Tool>
        <Tool aria-label="右对齐">{alignRight}</Tool>
        <Tool aria-label="两端对齐">{justify}</Tool>
        <Tool aria-label="分散对齐">{spread}</Tool>
        <Tool aria-label="增大段距">{lineGap}</Tool>
        <Tool aria-label="减小段距">{lineGap}</Tool>
        <Tool $w={27} aria-label="行距">
          {lineGap}
          <Caret color="#bbb" />
        </Tool>
      </ToolRow>
    </ToolGroup>
    <Separator />
    <Big $w={40} icon={icons.textBox} label="文本框" caret />
    <Big $w={38} icon={icons.shapes} label="形状" caret />
    <Stack $w={48} $pad={3}>
      <Small icon={icons.picture} label="图片" caret />
      <Small icon={icons.layers} label="排列" caret />
    </Stack>
    <Stack $w={48} $pad={3}>
      <Small dim icon={icons.fill} label="填充" caret />
      <Small dim icon={icons.outline} label="轮廓" caret />
    </Stack>
    <Separator />
    <Big $w={44} icon={icons.helper} label="文档助手" />
    <Big $w={54} icon={icons.tools} label="演示工具" />
  </Ribbon>
);

const OutlinePanel = () => (
  <Outline>
    <OutlineHead>
      <Svg w={9} h={8}>
        <path d="M5 1L0 6l5 5M11 1L6 6l5 5" />
      </Svg>
      大纲
    </OutlineHead>
    <ThumbArea>
      <ThumbList>
        {slides.map((s, i) => (
          <ThumbItem key={i}>
            <ThumbMeta $current={i === 0}>
              {i + 1}
              {s.star && (
                <svg width="11" height="9" viewBox="0 0 11 9" aria-hidden="true">
                  <path d="M6.500 0l1 3H11L8.500 5l1 4-3-2-3 2 1-4L2 3h3.500z" fill="#6a6a6a" />
                  <path d="M0 2h2M0 5h2M0 8h2" stroke="#999" />
                </svg>
              )}
            </ThumbMeta>
            <ThumbFrame $current={i === 0} $edge={s.edge} aria-label={`第 ${i + 1} 张`}>
              {s.art}
            </ThumbFrame>
          </ThumbItem>
        ))}
      </ThumbList>
      <Thumb $h={74} />
    </ThumbArea>
    <AddSlide aria-label="新建幻灯片">{icons.plus}</AddSlide>
  </Outline>
);

const MainSlide = () => (
  <Slide>
    <Crest>
      <Seal />
      <School>
        <SchoolName>
          {[..."鲁東大學"].map((c) => (
            <span key={c}>{c}</span>
          ))}
        </SchoolName>
        <SchoolLatin>
          <span>LUDONG</span>
          <span>UNIVERSITY</span>
        </SchoolLatin>
      </School>
    </Crest>
    <Topic>国家社科基金项目</Topic>
    <Headline>中华学术外译申报交流</Headline>
    <Authors>{"鲁东大学   林丽  刘晓丽  崔燕"}</Authors>
    <Pointer width="10" height="15" viewBox="0 0 10 15">
      <path d="M1 1v11l3-3 2 5 2-1-2-4h4z" fill="#fff" stroke="#333" strokeWidth="0.800" />
    </Pointer>
  </Slide>
);

const Status = ({ zoom, setZoom }) => (
  <StatusBar>
    <StatusCell $w={68} $pad={1} $size={10}>
      幻灯片 1 / 24
    </StatusCell>
    <StatusCell $w={65} $pad={7} $size={10}>
      Office 主题
    </StatusCell>
    <StatusCell $w={83} $pad={15}>
      {icons.fontMissing}
      缺失字体
    </StatusCell>
    <ViewTools>
      {icons.noteList}
      <Caret />
      <ViewButton $on aria-label="普通视图">
        {icons.normalView}
      </ViewButton>
      <ViewButton aria-label="幻灯片浏览">{icons.grid}</ViewButton>
      <ViewButton aria-label="阅读视图">{icons.book}</ViewButton>
      <PlayButton aria-label="放映">{icons.play}</PlayButton>
      <Caret />
      <Percent>70%</Percent>
      <Caret />
      <ZoomControl>
        <button aria-label="缩小">{icons.minus}</button>
        <ZoomRange
          type="range"
          min="10"
          max="210"
          value={zoom}
          onChange={(e) => setZoom(Number(e.target.value))}
          aria-label="缩放"
        />
        <button aria-label="放大">{icons.plus}</button>
      </ZoomControl>
      {icons.fit}
    </ViewTools>
  </StatusBar>
);

const Triangle = ({ d }) => (
  <svg width="5" height="5" viewBox="0 0 5 5" aria-hidden="true">
    <path d={d} fill="currentColor" />
  </svg>
);

const OfficeWindow = () => {
  const [zoom, setZoom] = useState(74);

  return (
    <Office>
      <TitleRow />
      <Menus />
      <RibbonRow />
      <RibbonMore aria-label="更多">›</RibbonMore>
      <Workspace>
        <QuickBar>
          <Grip />
          {icons.save}
          {icons.exportFile}
          {icons.print}
          {icons.preview}
          <Label>
            {icons.undo}
            <Caret />
          </Label>
          {icons.redo}
          {icons.more}
        </QuickBar>
        <OutlinePanel />
        <Editor>
          <CanvasRow>
            <Canvas>
              <MainSlide />
            </Canvas>
            <VScroll>
              <Triangle d="M0 4h5L2.500 1z" />
              <VThumb />
              <ScrollMarks>
                <Triangle d="M0 1h5L2.500 4z" />
                <Triangle d="M0 2h5L2.500 0zM0 5h5L2.500 3z" />
                <Triangle d="M0 0h5L2.500 2zM0 3h5L2.500 5z" />
              </ScrollMarks>
            </VScroll>
          </CanvasRow>
          <HScroll>
            <Triangle d="M4 0v5L1 2.500z" />
            <Triangle d="M1 0v5l3-2.500z" />
          </HScroll>
          <Notes>
            {icons.note}
            单击此处添加备注
          </Notes>
        </Editor>
        <Rail>
          <Svg w={12} h={4} box="0 0 12 4">
            <path d="M0 .5h12M0 3.500h12" stroke="#bbb" />
          </Svg>
          {icons.sliders}
          {icons.effects}
          {icons.swap}
          {icons.type}
          <RailFoot aria-label="应用">{icons.grid}</RailFoot>
        </Rail>
        <Collapse aria-label="收起成员">
          <Svg w={9} h={17} box="0 0 9 17">
            <path d="M1 1l7 7.500L1 16" />
          </Svg>
        </Collapse>
      </Workspace>
      <Status zoom={zoom} setZoom={setZoom} />
    </Office>
  );
};

const Participants = () => (
  <Sidebar>
    <TileList>
      {people.map((p) => (
        <Tile key={p.name} $active={p.active}>
          <Initials $active={p.active}>{p.initials}</Initials>
          {!p.active && <CameraOff>摄像头已关闭</CameraOff>}
          <TileName>{p.name}</TileName>
          {p.badge && (
            <TileBadge>
              {p.badge === "muted" ? <MutedBadge /> : <ShareBadge fill="#3d9dff" />}
            </TileBadge>
          )}
        </Tile>
      ))}
    </TileList>
    <ScrollDown aria-label="更多成员">
      <Svg w={18} h={10} box="0 0 18 10" sw={1.3}>
        <path d="M1 1l8 8 8-8" />
      </Svg>
    </ScrollDown>
    <Speaking>
      <b>林丽</b>
      正在发言
    </Speaking>
  </Sidebar>
);

const ControlBar = () => {
  const [layout, setLayout] = useState("演讲");

  return (
    <Controls>
      <Brand>
        <DingTalk />
        钉钉
      </Brand>
      <Actions>
        {actions.map((a) => (
          <Action key={a.label} disabled={a.disabled}>
            <Pill $tone={a.tone}>{a.icon}</Pill>
            {a.label}
          </Action>
        ))}
      </Actions>
      <Layouts>
        {layouts.map((l) => (
          <LayoutButton
            key={l.label}
            aria-pressed={layout === l.label}
            onClick={() => setLayout(l.label)}
          >
            <Segment $on={layout === l.label}>{l.icon}</Segment>
            {l.label}
          </LayoutButton>
        ))}
        <Settings>
          <Bare>
            <Gear />
          </Bare>
          设置
        </Settings>
      </Layouts>
    </Controls>
  );
};

const App = () => (
  <Page>
    <GlobalStyle />
    <Meeting>
      <Stage>
        <OfficeWindow />
        <StageFooter>
          <Speaker>林丽</Speaker>
          <ShareBadge fill="#2a8df5" />
        </StageFooter>
      </Stage>
      <Participants />
    </Meeting>
    <ControlBar />
    <Desktop>
      <DesktopItem $w={310} $h={3} $color="#f2f2f2" />
      <DesktopItem $w={43} $h={4} $color="#3c474b" />
    </Desktop>
  </Page>
);

export default App;
